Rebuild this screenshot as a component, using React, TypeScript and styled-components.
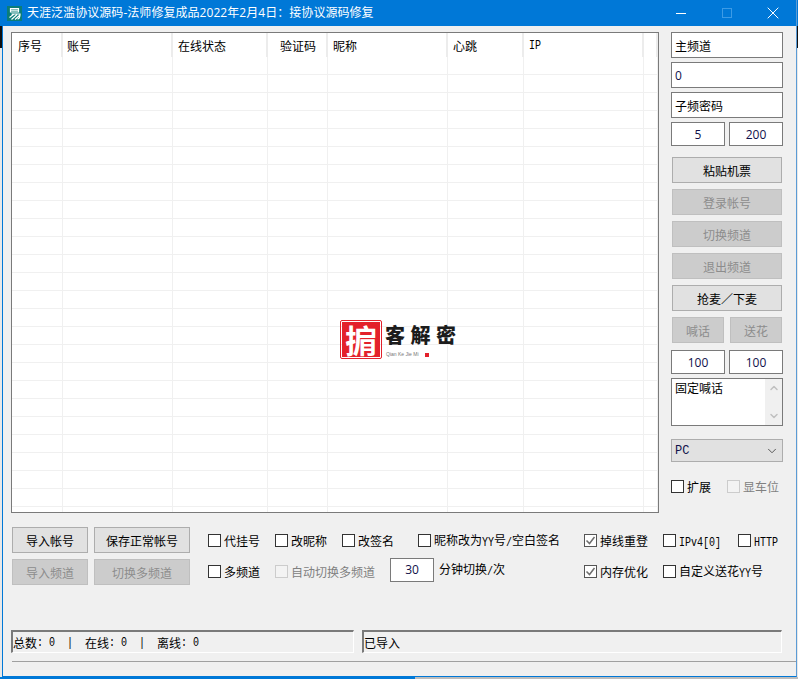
import styled, { createGlobalStyle } from "styled-components";
import { ChevronDown, ChevronUp } from "lucide-react";

const CJK = `"Noto Sans CJK SC", "Liberation Sans", sans-serif`;
const MONO = `"Liberation Mono", "Noto Sans CJK SC", monospace`;

const GlobalStyle = createGlobalStyle`
  html, body {
    margin: 0;
    padding: 0;
  }
  /* what shows of the desktop round the window */
  body {
    background: linear-gradient(
      #0078d7 0 26px,
      #101010 26px 48px,
      #e8e8e8 48px
    );
  }
  * {
    box-sizing: border-box;
  }
`;

const Window = styled.div`
  width: 795px;
  height: 677px;
  margin-left: 2px;
  display: flex;
  flex-direction: column;
  border-left: 1px solid #0078d7;
  border-right: 1px solid #5b9bd5;
  border-bottom: 1px solid #0078d7;
  font-family: ${CJK};
  font-size: 12px;
  line-height: 16px;
  color: #000;
`;

const TaskbarEdge = styled.div`
  height: 2px;
  background: linear-gradient(90deg, #0078d7 415px, #bdbdbd 415px);
`;

const TitleBar = styled.div`
  height: 26px;
  flex: none;
  display: flex;
  align-items: center;
  gap: 5px;
  padding-left: 4px;
  background: #0078d7;
  color: #fff;
  font-family: "Open Sans", ${CJK};
  letter-spacing: 0.05px;
`;

const Controls = styled.div`
  margin-left: auto;
  display: flex;
`;

const Control = styled.div`
  width: 46px;
  height: 26px;
  display: flex;
  align-items: center;
  justify-content: center;
`;

const Client = styled.div`
  flex: 1;
  background: #f0f0f0;
  padding: 6px 13px 0 8px;
`;

const MainRow = styled.div`
  display: flex;
  gap: 12px;
`;

const Table = styled.div`
  position: relative;
  width: 648px;
  height: 481px;
  border: 1px solid #7a7a7a;
  background: #fff;
  overflow: hidden;
`;

const COLUMNS = "51px 110px 95px 60px 120px 76px 120px 14px";

const HeaderRow = styled.div`
  display: grid;
  grid-template-columns: ${COLUMNS};
  height: 24px;
`;

const HeaderCell = styled.div<{ $indent?: number }>`
  display: flex;
  align-items: center;
  padding: 2px 0 0 ${(p) => p.$indent ?? 5}px;
  border-right: 2px solid #ececec;
`;

const BodyRow = styled.div`
  display: grid;
  grid-template-columns: ${COLUMNS};
  height: 18px;
  border-bottom: 1px solid #f0f0f0;
`;

const BodyCell = styled.div`
  border-right: 1px solid #f0f0f0;
`;

const Logo = styled.div`
  position: absolute;
  left: 328px;
  top: 287px;
  display: flex;
  gap: 3px;
`;

const Seal = styled.div`
  width: 42px;
  height: 39px;
  padding: 1px;
  border: 1px solid #e3212b;
  border-radius: 2px;
`;

const SealInner = styled.div`
  width: 100%;
  height: 100%;
  background: #e3212b;
  color: #fff;
  font-size: 32px;
  font-weight: 700;
  line-height: 35px;
  text-align: center;
`;

const LogoText = styled.div`
  display: flex;
  flex-direction: column;
  padding-top: 3px;
`;

const LogoName = styled.div`
  font-size: 20px;
  font-weight: 900;
  line-height: 24px;
  letter-spacing: 5.5px;
  color: #1c1c1c;
`;

const LogoPinyin = styled.div`
  display: flex;
  align-items: center;
  gap: 6px;
  margin-top: 4px;
  padding-left: 1px;
  font-family: "Liberation Sans", sans-serif;
  font-size: 5px;
  line-height: 7px;
  color: #777;
`;

const LogoDot = styled.span`
  width: 4px;
  height: 4px;
  background: #e3212b;
`;

const Side = styled.div`
  width: 112px;
  display: flex;
  flex-direction: column;
  gap: 4px;
`;

const Field = styled.div<{ $height?: number; $center?: boolean }>`
  width: 100%;
  flex: none;
  height: ${(p) => p.$height ?? 26}px;
  display: flex;
  align-items: center;
  justify-content: ${(p) => (p.$center ? "center" : "flex-start")};
  padding: 1px 0 0 ${(p) => (p.$center ? 0 : 3)}px;
  background: #fff;
  border: 1px solid #7a7a7a;
`;

const Digits = styled.span`
  font-family: "Open Sans", "Liberation Sans", sans-serif;
  font-size: 12px;
  color: #10104a;
`;

// the original's latin glyphs are narrow and tall, 6px wide next to 12px CJK
const Latin = styled.span`
  display: inline-block;
  font-family: ${MONO};
  font-size: 10px;
  white-space: pre;
  transform: scaleY(1.25);
`;

const FieldPair = styled.div<{ $top?: number }>`
  display: flex;
  flex: none;
  gap: 4px;
  margin-top: ${(p) => p.$top ?? 0}px;
  ${Field} {
    flex: 1;
    width: auto;
  }
`;

const ButtonStack = styled.div`
  display: flex;
  flex: none;
  flex-direction: column;
  gap: 6px;
  margin-top: 7px;
  padding: 0 1px;
`;

const ButtonPair = styled.div`
  display: flex;
  gap: 6px;
`;

const Btn = styled.div<{ $off?: boolean }>`
  width: 100%;
  height: 26px;
  display: flex;
  align-items: center;
  justify-content: center;
  padding-top: 1px;
  background: ${(p) => (p.$off ? "#cccccc" : "#e1e1e1")};
  border: 1px solid ${(p) => (p.$off ? "#bfbfbf" : "#adadad")};
  color: ${(p) => (p.$off ? "#8c8c8c" : "#000")};
`;

const TextBox = styled.div`
  height: 48px;
  flex: none;
  display: flex;
  justify-content: space-between;
  padding: 1px 0 0 3px;
  background: #fff;
  border: 1px solid #7a7a7a;
`;

const ScrollBar = styled.div`
  width: 17px;
  display: flex;
  flex-direction: column;
  justify-content: space-between;
  align-items: center;
  margin-top: -1px;
  padding: 3px 0;
  background: #f0f0f0;
  color: #c0c0c0;
`;

const Dropdown = styled.div`
  height: 23px;
  flex: none;
  margin-top: 9px;
  display: flex;
  align-items: center;
  justify-content: space-between;
  padding: 0 3px 0 3px;
  background: #e1e1e1;
  border: 1px solid #adadad;
  color: #10104a;
`;

const DropdownLabel = styled.span`
  font-family: ${MONO};
  font-size: 12px;
`;

const SideChecks = styled.div`
  display: flex;
  flex: none;
  margin-top: 12px;
`;

const Option = styled.label<{ $width?: number; $off?: boolean }>`
  flex: none;
  width: ${(p) => (p.$width ? `${p.$width}px` : "auto")};
  display: flex;
  align-items: center;
  gap: 3px;
  color: ${(p) => (p.$off ? "#808080" : "#000")};
`;

const OptionText = styled.span`
  padding-top: 1px;
`;

const Box = styled.span<{ $on?: boolean; $off?: boolean }>`
  width: 13px;
  height: 13px;
  flex: none;
  display: flex;
  align-items: center;
  justify-content: center;
  background: ${(p) => (p.$off ? "#f3f3f3" : "#fff")};
  border: 1px solid ${(p) => (p.$off ? "#cccccc" : p.$on ? "#555" : "#333")};
`;

const BottomRow = styled.div`
  display: flex;
  margin-top: 14px;
  height: 58px;
`;

const BottomButtons = styled.div`
  width: 197px;
  display: grid;
  grid-template-columns: 76px 96px;
  grid-auto-rows: 26px;
  gap: 6px;
  padding-left: 1px;
`;

const OptionRows = styled.div`
  display: flex;
  flex-direction: column;
  gap: 5px;
  margin-top: 1px;
`;

const OptionRow = styled.div`
  height: 27px;
  display: flex;
`;

const SpinGroup = styled.div`
  width: 194px;
  display: flex;
  align-items: center;
  gap: 5px;
  padding-bottom: 3px;
`;

const Spin = styled.div`
  width: 44px;
  height: 24px;
  display: flex;
  align-items: center;
  justify-content: center;
  background: #fff;
  border: 1px solid #7a7a7a;
`;

const StatusRow = styled.div`
  display: flex;
  gap: 8px;
  margin-top: 45px;
`;

const StatusPanel = styled.div<{ $width: number }>`
  width: ${(p) => p.$width}px;
  height: 23px;
  display: flex;
  align-items: center;
  padding-top: 2px;
  border-top: 2px solid #7a7a7a;
  border-left: 2px solid #7a7a7a;
  border-right: 1px solid #fff;
  border-bottom: 1px solid #fff;
  white-space: pre;
`;

const Separator = styled.div`
  height: 1px;
  margin: 8px -13px 0 1px;
  background: #a0a0a0;
`;

const AppIcon = () => (
  <svg width="15" height="15" viewBox="0 0 15 15">
    <rect width="15" height="15" fill="#0b7d78" />
    <path
      d="M3.5 2.5h8v3.5h-8zM3.5 4.2h8M4.5 8h8.5c0 3-.6 5-2.5 5M7 8l-4.5 3.5M10 8.5l-5.5 5M13 9l-5 4.5"
      fill="none"
      stroke="#fff"
      strokeWidth="1.2"
    />
  </svg>
);

const WindowIcon = ({ kind }: { kind: "min" | "max" | "close" }) => (
  <svg width="12" height="12" viewBox="0 0 12 12" fill="none">
    {kind === "min" && <path d="M1 6.5h10" stroke="#fff" />}
    {kind === "max" && <rect x="1.5" y="1.5" width="9" height="9" stroke="#3c9be6" />}
    {kind === "close" && <path d="M.7.7l10.6 10.6M11.3.7L.7 11.3" stroke="#fff" />}
  </svg>
);

const Check = ({
  children,
  width,
  on,
  off,
}: {
  children: React.ReactNode;
  width?: number;
  on?: boolean;
  off?: boolean;
}) => (
  <Option $width={width} $off={off}>
    <Box $on={on} $off={off}>
      {on && (
        <svg width="11" height="11" viewBox="0 0 11 11" fill="none">
          <path d="M1.5 5.5l3 3 5-6.5" stroke="#6e6e6e" strokeWidth="1.5" />
        </svg>
      )}
    </Box>
    <OptionText>{children}</OptionText>
  </Option>
);

const App = () => {
  const rows = Array.from({ length: 26 }, (_, i) => i);
  const cells = Array.from({ length: 8 }, (_, i) => i);

  return (
    <>
      <GlobalStyle />
      <Window>
        <TitleBar>
          <AppIcon />
          <span>天涯泛滥协议源码-法师修复成品2022年2月4日：接协议源码修复</span>
          <Controls>
            <Control>
              <WindowIcon kind="min" />
            </Control>
            <Control>
              <WindowIcon kind="max" />
            </Control>
            <Control>
              <WindowIcon kind="close" />
            </Control>
          </Controls>
        </TitleBar>
        <Client>
          <MainRow>
            <Table>
              <HeaderRow>
                <HeaderCell $indent={6}>序号</HeaderCell>
                <HeaderCell $indent={4}>账号</HeaderCell>
                <HeaderCell>在线状态</HeaderCell>
                <HeaderCell $indent={12}>验证码</HeaderCell>
                <HeaderCell>昵称</HeaderCell>
                <HeaderCell>心跳</HeaderCell>
                <HeaderCell>
                  <Latin>IP</Latin>
                </HeaderCell>
                <HeaderCell />
              </HeaderRow>
              {rows.map((row) => (
                <BodyRow key={row}>
                  {cells.map((cell) => (
                    <BodyCell key={cell} />
                  ))}
                </BodyRow>
              ))}
              <Logo>
                <Seal>
                  <SealInner>掮</SealInner>
                </Seal>
                <LogoText>
                  <LogoName>客解密</LogoName>
                  <LogoPinyin>
                    Qian Ke Jie Mi
                    <LogoDot />
                  </LogoPinyin>
                </LogoText>
              </Logo>
            </Table>
            <Side>
              <Field>主频道</Field>
              <Field>
                <Digits>0</Digits>
              </Field>
              <Field>子频密码</Field>
              <FieldPair>
                <Field $height={24} $center>
                  <Digits>5</Digits>
                </Field>
                <Field $height={24} $center>
                  <Digits>200</Digits>
                </Field>
              </FieldPair>
              <ButtonStack>
                <Btn>粘贴机票</Btn>
                <Btn $off>登录帐号</Btn>
                <Btn $off>切换频道</Btn>
                <Btn $off>退出频道</Btn>
                <Btn>抢麦／下麦</Btn>
                <ButtonPair>
                  <Btn $off>喊话</Btn>
                  <Btn $off>送花</Btn>
                </ButtonPair>
              </ButtonStack>
              <FieldPair $top={3}>
                <Field $height={24} $center>
                  <Digits>100</Digits>
                </Field>
                <Field $height={24} $center>
                  <Digits>100</Digits>
                </Field>
              </FieldPair>
              <TextBox>
                固定喊话
                <ScrollBar>
                  <ChevronUp size={12} strokeWidth={3} />
                  <ChevronDown size={12} strokeWidth={3} />
                </ScrollBar>
              </TextBox>
              <Dropdown>
                <DropdownLabel>PC</DropdownLabel>
                <ChevronDown size={14} strokeWidth={1.5} color="#444" />
              </Dropdown>
              <SideChecks>
                <Check width={56}>扩展</Check>
                <Check off>显车位</Check>
              </SideChecks>
            </Side>
          </MainRow>
          <BottomRow>
            <BottomButtons>
              <Btn>导入帐号</Btn>
              <Btn>保存正常帐号</Btn>
              <Btn $off>导入频道</Btn>
              <Btn $off>切换多频道</Btn>
            </BottomButtons>
            <OptionRows>
              <OptionRow>
                <Check width={67}>代挂号</Check>
                <Check width={67}>改昵称</Check>
                <Check width={76}>改签名</Check>
                <Check width={166}>
                  昵称改为<Latin>YY</Latin>号<Latin>/</Latin>空白签名
                </Check>
                <Check width={79} on>
                  掉线重登
                </Check>
                <Check width={75}>
                  <Latin>IPv4[0]</Latin>
                </Check>
                <Check>
                  <Latin>HTTP</Latin>
                </Check>
              </OptionRow>
              <OptionRow>
                <Check width={67}>多频道</Check>
                <Check width={115} off>
                  自动切换多频道
                </Check>
                <SpinGroup>
                  <Spin>
                    <Digits>30</Digits>
                  </Spin>
                  <span>
                    分钟切换<Latin>/</Latin>次
                  </span>
                </SpinGroup>
                <Check width={79} on>
                  内存优化
                </Check>
                <Check>
                  自定义送花<Latin>YY</Latin>号
                </Check>
              </OptionRow>
            </OptionRows>
          </BottomRow>
          <StatusRow>
            <StatusPanel $width={343}>
              总数<Latin>: 0  |  </Latin>在线<Latin>: 0  |  </Latin>离线<Latin>: 0</Latin>
            </StatusPanel>
            <StatusPanel $width={420}>已导入</StatusPanel>
          </StatusRow>
          <Separator />
        </Client>
      </Window>
      <TaskbarEdge />
    </>
  );
};

export default App;
